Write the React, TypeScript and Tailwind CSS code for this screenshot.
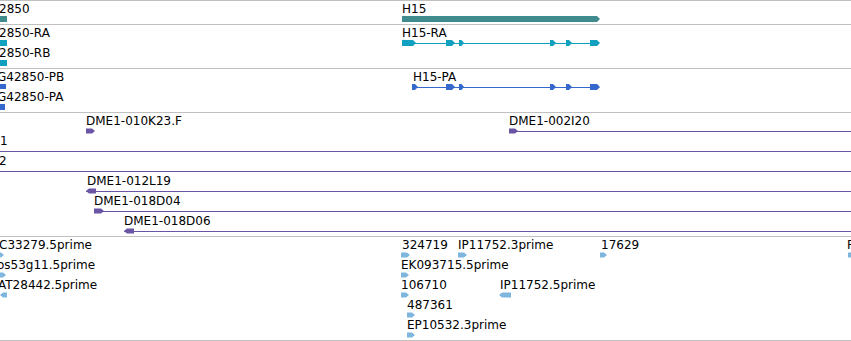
import type { ReactNode } from "react";

const TEAL = "#3f8b8e";
const CYAN = "#12a0c0";
const BLUE = "#3468cc";
const PURPLE = "#6a55a4";
const EST = "#7fb6de";

type Dir = "r" | "l" | "box";

// arrow-ish glyph polygon for a feature block
function shape(x1: number, x2: number, h: number, dir: Dir) {
  const w = x2 - x1;
  const tip = Math.min(3, w / 2);
  if (dir === "r") {
    return `${x1},0 ${x2 - tip},0 ${x2},${h / 2} ${x2 - tip},${h} ${x1},${h}`;
  }
  if (dir === "l") {
    return `${x2},0 ${x1 + tip},0 ${x1},${h / 2} ${x1 + tip},${h} ${x2},${h}`;
  }
  return `${x1},0 ${x2},0 ${x2},${h} ${x1},${h}`;
}

// a label sits on the canvas at its genomic x position
function Label({ x, children }: { x: number; children: ReactNode }) {
  return (
    <span
      className="absolute top-px whitespace-nowrap text-[12px] leading-[14px] text-black"
      style={{ left: x }}
    >
      {children}
    </span>
  );
}

// glyph strip of a row, drawn under the labels
function Strip({ h = 6, children }: { h?: number; children: ReactNode }) {
  return (
    <svg className="absolute left-0 top-[15px]" width={851} height={h} viewBox={`0 0 851 ${h}`}>
      {children}
    </svg>
  );
}

function Row({ children }: { children?: ReactNode }) {
  return <div className="relative h-[20px] shrink-0">{children}</div>;
}

function Track({ h, children }: { h: string; children: ReactNode }) {
  return <div className={`flex flex-col border-b border-[#c0c0c0] ${h}`}>{children}</div>;
}

function Transcript({ color, exons, from, to }: {
  color: string;
  exons: [number, number][];
  from: number;
  to: number;
}) {
  return (
    <>
      <rect x={from} y={3} width={to - from} height={1} fill={color} />
      {exons.map(([a, b], i) => (
        <polygon key={i} points={shape(a, b, 6, "r")} fill={color} />
      ))}
    </>
  );
}

type Feat = { label?: string; lx?: number; x: number; w: number; dir: Dir; line?: boolean };

const clones: Feat[][] = [
  [
    { label: "DME1-010K23.F", x: 86, w: 9, dir: "r" },
    { label: "DME1-002I20", x: 509, w: 9, dir: "r", line: true },
  ],
  [{ label: "1", lx: 0, x: -20, w: 9, dir: "r", line: true }],
  [{ label: "2", lx: -1, x: -20, w: 9, dir: "r", line: true }],
  [{ label: "DME1-012L19", x: 86, lx: 87, w: 10, dir: "l", line: true }],
  [{ label: "DME1-018D04", x: 94, w: 10, dir: "r", line: true }],
  [{ label: "DME1-018D06", x: 124, w: 10, dir: "l", line: true }],
];

const ests: Feat[][] = [
  [
    { label: "C33279.5prime", lx: -1, x: -5, w: 9, dir: "r" },
    { label: "324719", lx: 402, x: 401, w: 9, dir: "r" },
    { label: "IP11752.3prime", lx: 458, x: 458, w: 9, dir: "r" },
    { label: "17629", lx: 601, x: 600, w: 7, dir: "r" },
    { label: "F", lx: 847, x: 848, w: 9, dir: "r" },
  ],
  [
    { label: "os53g11.5prime", lx: -3, x: -3, w: 9, dir: "r" },
    { label: "EK093715.5prime", lx: 401, x: 401, w: 8, dir: "r" },
  ],
  [
    { label: "AT28442.5prime", lx: -2, x: 0, w: 7, dir: "l" },
    { label: "106710", lx: 401, x: 401, w: 8, dir: "r" },
    { label: "IP11752.5prime", lx: 500, x: 499, w: 12, dir: "l" },
  ],
  [{ label: "487361", lx: 407, x: 407, w: 8, dir: "r" }],
  [{ label: "EP10532.3prime", lx: 407, x: 407, w: 8, dir: "r" }],
];

function FeatureRow({ feats, color }: { feats: Feat[]; color: string }) {
  return (
    <Row>
      {feats.map((f) => (
        <Label key={f.label} x={f.lx ?? f.x}>{f.label}</Label>
      ))}
      <Strip h={6}>
        {feats.map((f) => (
          <g key={f.label}>
            {f.line && <rect x={Math.max(f.x, 0)} y={3} width={851 - Math.max(f.x, 0)} height={1} fill={color} />}
            <polygon points={shape(f.x, f.x + f.w, 5, f.dir)} fill={color} transform="translate(0 0.5)" />
          </g>
        ))}
      </Strip>
    </Row>
  );
}

export default function App() {
  return (
    <div className="h-[341px] w-[851px] overflow-hidden bg-white font-['DejaVu_Sans',sans-serif]">
      <div className="flex flex-col border-t border-[#c0c0c0]">
        {/* Gene */}
        <Track h="h-[24px]">
          <Row>
            <Label x={-1}>2850</Label>
            <Label x={402}>H15</Label>
            <Strip>
              <rect x={0} y={0} width={7} height={6} fill={TEAL} />
              <polygon points={shape(402, 600, 6, "r")} fill={TEAL} />
            </Strip>
          </Row>
        </Track>

        {/* mRNA */}
        <Track h="h-[44px]">
          <Row>
            <Label x={-1}>2850-RA</Label>
            <Label x={402}>H15-RA</Label>
            <Strip>
              <rect x={0} y={0} width={7} height={6} fill={CYAN} />
              <Transcript
                color={CYAN}
                from={402}
                to={598}
                exons={[[402, 416], [446, 455], [459, 464], [550, 556], [566, 572], [590, 600]]}
              />
            </Strip>
          </Row>
          <Row>
            <Label x={-1}>2850-RB</Label>
            <Strip>
              <rect x={0} y={0} width={7} height={6} fill={CYAN} />
            </Strip>
          </Row>
        </Track>

        {/* Protein */}
        <Track h="h-[44px]">
          <Row>
            <Label x={-3}>G42850-PB</Label>
            <Label x={413}>H15-PA</Label>
            <Strip>
              <rect x={0} y={0} width={6} height={5} fill={BLUE} />
              <Transcript
                color={BLUE}
                from={412}
                to={598}
                exons={[[412, 418], [446, 455], [459, 464], [550, 556], [566, 572], [590, 600]]}
              />
            </Strip>
          </Row>
          <Row>
            <Label x={-3}>G42850-PA</Label>
            <Strip>
              <rect x={0} y={0} width={5} height={6} fill={BLUE} />
            </Strip>
          </Row>
        </Track>

        {/* BAC clone ends */}
        <Track h="h-[124px]">
          {clones.map((feats, i) => (
            <FeatureRow key={i} feats={feats} color={PURPLE} />
          ))}
        </Track>

        {/* ESTs */}
        <Track h="h-[104px]">
          {ests.map((feats, i) => (
            <FeatureRow key={i} feats={feats} color={EST} />
          ))}
        </Track>
      </div>
    </div>
  );
}
